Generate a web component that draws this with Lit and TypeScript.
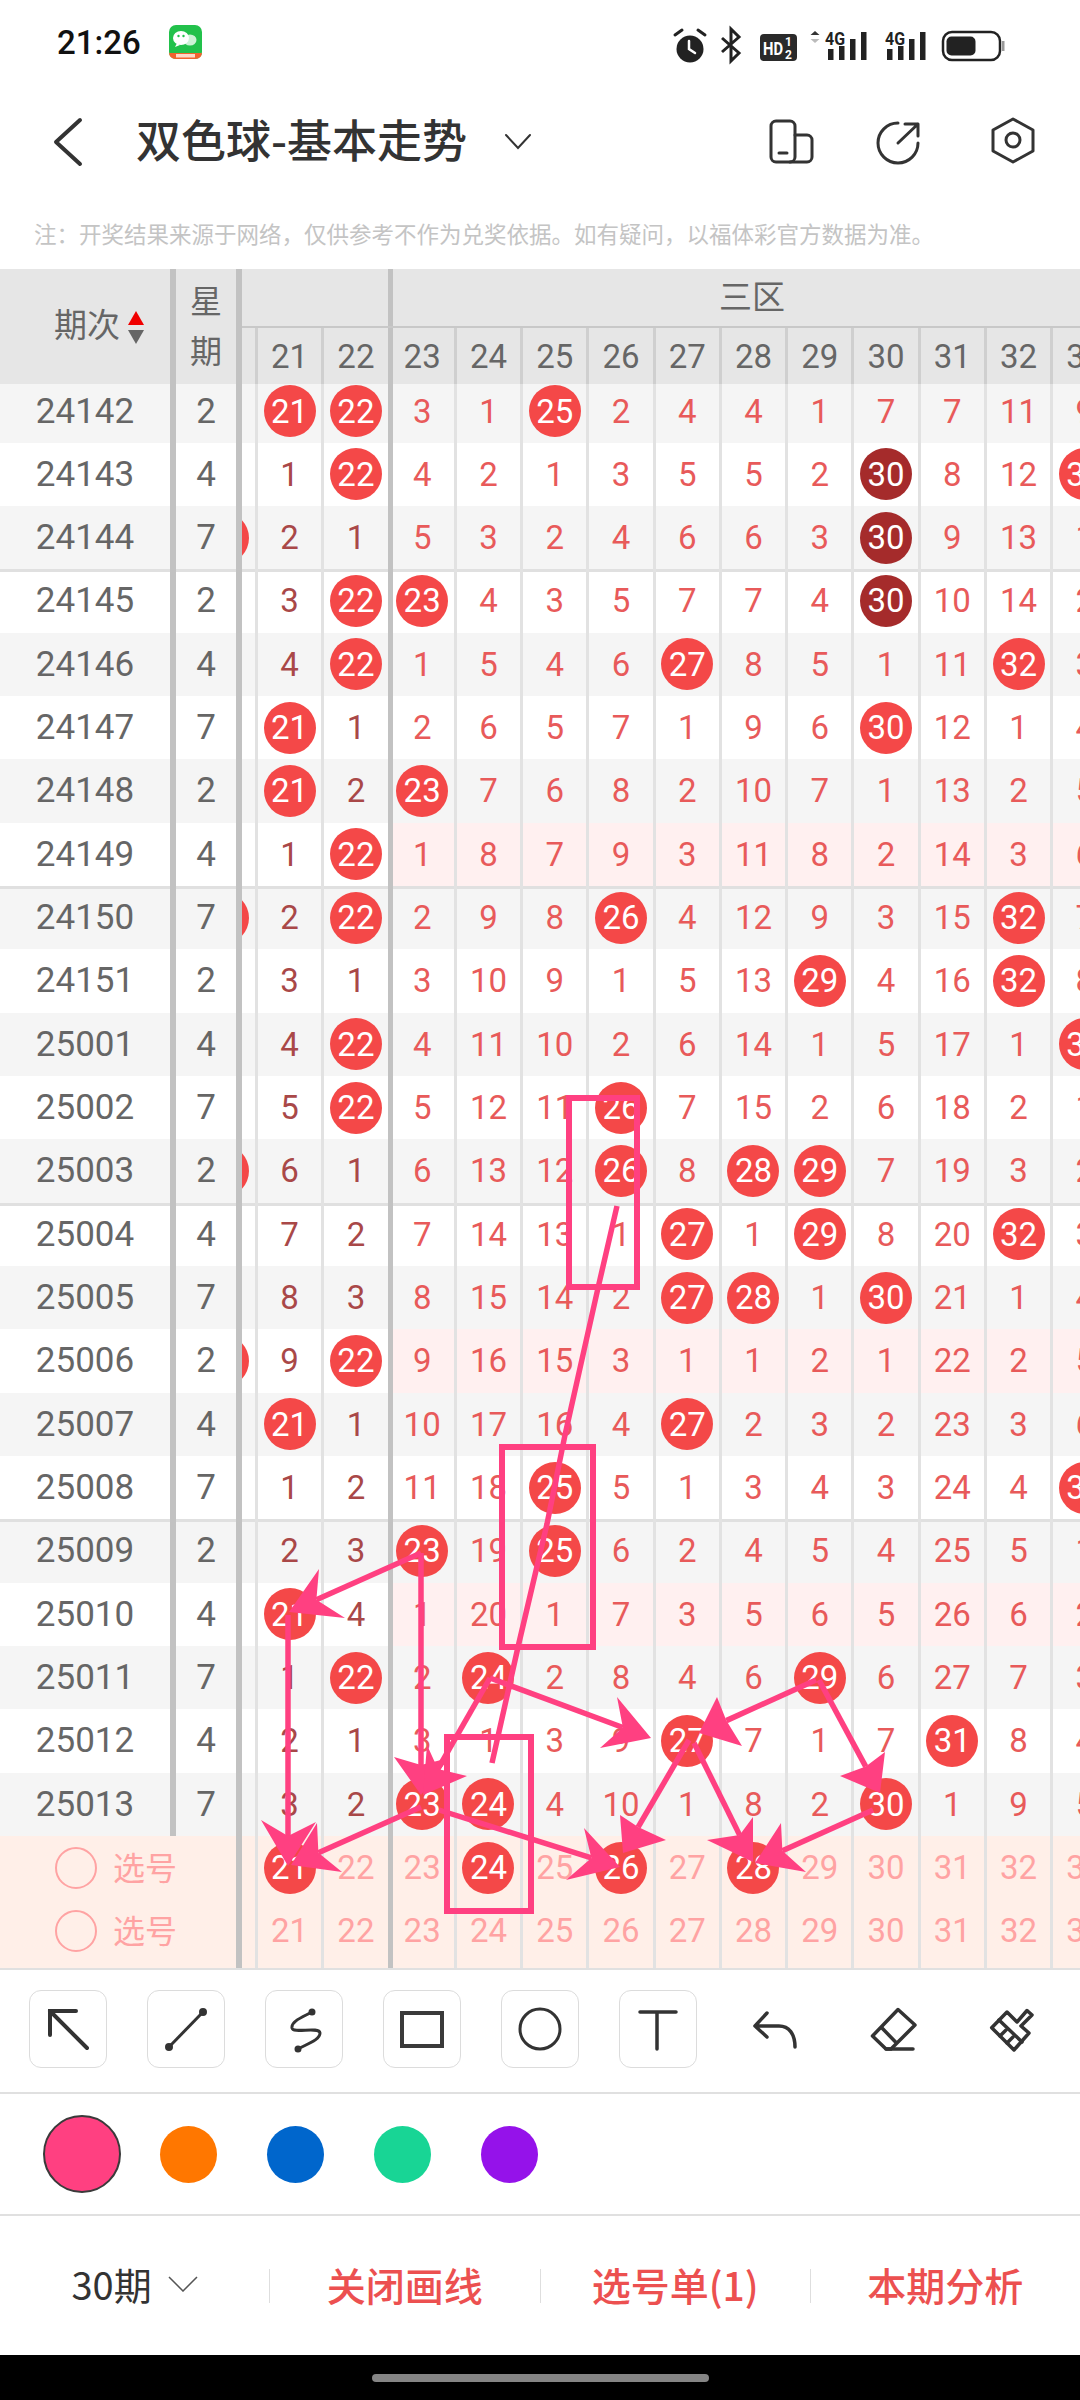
import { LitElement, html, svg, css } from 'lit';
import { customElement } from 'lit/decorators.js';

const ROWS: [string, string, string, boolean?][] = [
  ['24142', '2', '21* 22* 3 1 25* 2 4 4 1 7 7 11 9'],
  ['24143', '4', '1 22* 4 2 1 3 5 5 2 30! 8 12 33*'],
  ['24144', '7', '2 1 5 3 2 4 6 6 3 30! 9 13 1', true],
  ['24145', '2', '3 22* 23* 4 3 5 7 7 4 30! 10 14 2'],
  ['24146', '4', '4 22* 1 5 4 6 27* 8 5 1 11 32* 3'],
  ['24147', '7', '21* 1 2 6 5 7 1 9 6 30* 12 1 4'],
  ['24148', '2', '21* 2 23* 7 6 8 2 10 7 1 13 2 5'],
  ['24149', '4', '1 22* 1 8 7 9 3 11 8 2 14 3 6'],
  ['24150', '7', '2 22* 2 9 8 26* 4 12 9 3 15 32* 7', true],
  ['24151', '2', '3 1 3 10 9 1 5 13 29* 4 16 32* 8'],
  ['25001', '4', '4 22* 4 11 10 2 6 14 1 5 17 1 33*'],
  ['25002', '7', '5 22* 5 12 11 26* 7 15 2 6 18 2 1'],
  ['25003', '2', '6 1 6 13 12 26* 8 28* 29* 7 19 3 2', true],
  ['25004', '4', '7 2 7 14 13 1 27* 1 29* 8 20 32* 3'],
  ['25005', '7', '8 3 8 15 14 2 27* 28* 1 30* 21 1 4'],
  ['25006', '2', '9 22* 9 16 15 3 1 1 2 1 22 2 5', true],
  ['25007', '4', '21* 1 10 17 16 4 27* 2 3 2 23 3 6'],
  ['25008', '7', '1 2 11 18 25* 5 1 3 4 3 24 4 33*'],
  ['25009', '2', '2 3 23* 19 25* 6 2 4 5 4 25 5 1'],
  ['25010', '4', '21* 4 1 20 1 7 3 5 6 5 26 6 2'],
  ['25011', '7', '1 22* 2 24* 2 8 4 6 29* 6 27 7 3'],
  ['25012', '4', '2 1 3 1 3 9 27* 7 1 7 31* 8 4'],
  ['25013', '7', '3 2 23* 24* 4 10 1 8 2 30* 1 9 5'],
];
const HOT_ROWS = [7, 15, 19];
const COLS = [21, 22, 23, 24, 25, 26, 27, 28, 29, 30, 31, 32, 33];
const PICKED = [21, 24, 26, 28];

type P = [number, number];
const ARROWS: { from: P; tip: P; a: P; b: P }[] = [
  { from: [421, 1553], tip: [289, 1612], a: [319, 1569], b: [345, 1618] },
  { from: [288, 1615], tip: [288, 1866], a: [261, 1820], b: [316, 1822] },
  { from: [421, 1807], tip: [291, 1865], a: [317, 1823], b: [342, 1872] },
  { from: [421, 1553], tip: [421, 1795], a: [394, 1757], b: [449, 1758] },
  { from: [490, 1678], tip: [423, 1795], a: [467, 1776], b: [427, 1745] },
  { from: [490, 1678], tip: [651, 1738], a: [617, 1697], b: [600, 1748] },
  { from: [816, 1680], tip: [699, 1733], a: [717, 1697], b: [742, 1746] },
  { from: [689, 1740], tip: [623, 1853], a: [620, 1815], b: [666, 1840] },
  { from: [439, 1810], tip: [620, 1867], a: [584, 1828], b: [566, 1880] },
  { from: [694, 1743], tip: [753, 1862], a: [707, 1840], b: [753, 1817] },
  { from: [873, 1810], tip: [755, 1863], a: [781, 1823], b: [806, 1872] },
  { from: [819, 1680], tip: [880, 1793], a: [885, 1752], b: [840, 1776] },
];
const SWATCHES = ['#ff4081', '#ff7700', '#0066cc', '#18d595', '#9512ea'];

@customElement('app-root')
export class AppRoot extends LitElement {
  static styles = css`
    :host {
      display: flex;
      flex-direction: column;
      width: 1080px;
      height: 2400px;
      overflow: hidden;
      background: #fff;
      font-family: Roboto, 'Noto Sans CJK SC', sans-serif;
    }
    .status {
      height: 84px;
      flex: none;
      display: flex;
      align-items: center;
      padding-left: 57px;
      box-sizing: border-box;
    }
    .time {
      font-size: 33px;
      font-weight: 500;
      color: #111;
      width: 112px;
    }
    .status svg {
      display: block;
      overflow: visible;
    }
    .status .right {
      margin-left: auto;
      display: block;
      margin-right: 70px;
    }
    .nav {
      height: 116px;
      flex: none;
      display: flex;
      align-items: center;
      padding: 0 44px 0 54px;
      box-sizing: border-box;
      color: #333;
    }
    .nav svg {
      display: block;
      overflow: visible;
      flex: none;
    }
    .title {
      font-family: 'Noto Sans CJK SC', sans-serif;
      font-size: 45px;
      line-height: 60px;
      font-weight: 500;
      margin: 0 38px 6px 54px;
      white-space: nowrap;
    }
    .nav-icons {
      margin-left: auto;
      display: flex;
      gap: 63px;
    }
    .nav-icons svg:last-child {
      margin-left: 4px;
    }
    .note {
      height: 69px;
      flex: none;
      box-sizing: border-box;
      padding: 18px 0 0 34px;
      font-family: 'Noto Sans CJK SC', sans-serif;
      font-size: 22.5px;
      line-height: 30px;
      color: #c4c4c4;
      white-space: nowrap;
    }
    .table {
      position: relative;
      height: 1699px;
      flex: none;
      overflow: hidden;
      background: #fff;
    }
    .overlay {
      position: absolute;
      left: 0;
      top: 0;
      width: 1080px;
      height: 1699px;
      pointer-events: none;
    }
    .head {
      height: 115px;
      display: flex;
      background: #e6e6e6;
      color: #666;
      overflow: hidden;
    }
    .head-period {
      width: 176px;
      flex: none;
      box-sizing: border-box;
      border-right: 6px solid #c2c2c2;
      padding-left: 28px;
      display: flex;
      align-items: center;
      justify-content: center;
      gap: 8px;
      font-family: 'Noto Sans CJK SC', sans-serif;
      font-size: 33px;
    }
    .head-period span:first-child {
      margin-bottom: 8px;
    }
    .sort {
      display: flex;
      flex-direction: column;
      gap: 5px;
      margin-top: 2px;
    }
    .sort i {
      display: block;
      width: 0;
      height: 0;
      border-left: 8.5px solid transparent;
      border-right: 8.5px solid transparent;
    }
    .sort .up {
      border-bottom: 14px solid #f00000;
    }
    .sort .down {
      border-top: 14px solid #666;
    }
    .head-week {
      width: 66px;
      flex: none;
      box-sizing: border-box;
      border-right: 6px solid #c2c2c2;
      padding-bottom: 6px;
      display: flex;
      flex-direction: column;
      align-items: center;
      justify-content: center;
      font-family: 'Noto Sans CJK SC', sans-serif;
      font-size: 32px;
      line-height: 50px;
    }
    .head-cols {
      flex: none;
      width: 900px;
      display: flex;
      flex-direction: column;
    }
    .zones {
      height: 57px;
      flex: none;
      display: flex;
      border-bottom: 2px solid #c8c8c8;
    }
    .zone-blank {
      width: 145.5px;
      flex: none;
    }
    .zone {
      width: 729px;
      flex: none;
      box-sizing: border-box;
      padding-bottom: 6px;
      display: flex;
      align-items: center;
      justify-content: center;
      font-family: 'Noto Sans CJK SC', sans-serif;
      font-size: 33px;
      box-shadow: inset 5px 0 0 #c2c2c2;
    }
    .nums {
      flex: 1;
      display: flex;
    }
    .body {
      height: 1584px;
      overflow: hidden;
    }
    .rows {
      margin-top: -4.67px;
    }
    .row {
      height: 63.33px;
      display: flex;
      font-size: 35px;
      color: #666;
    }
    .row.even {
      background: #f5f5f5;
    }
    .row.line {
      box-shadow: inset 0 3px 0 #e0e0e0;
    }
    .period {
      width: 176px;
      flex: none;
      box-sizing: border-box;
      border-right: 6px solid #c2c2c2;
      display: flex;
      align-items: center;
      justify-content: center;
    }
    .week {
      width: 66px;
      flex: none;
      box-sizing: border-box;
      border-right: 6px solid #c2c2c2;
      display: flex;
      align-items: center;
      justify-content: center;
    }
    .stub {
      width: 13px;
      flex: none;
      overflow: hidden;
      display: flex;
      align-items: center;
    }
    .stub .ball {
      margin-left: -45px;
    }
    .cell {
      width: 66.27px;
      flex: none;
      box-sizing: border-box;
      padding-left: 3px;
      display: flex;
      align-items: center;
      justify-content: center;
      font-size: 33px;
      color: #e85a5a;
      box-shadow: inset 3px 0 0 #e2e2e2;
    }
    .head .cell {
      color: #666;
      box-shadow: inset 3px 0 0 #cfcfcf;
    }
    .cell.dark {
      color: #a94848;
    }
    .cell.split,
    .head .cell.split {
      box-shadow: inset 5px 0 0 #c2c2c2;
    }
    .row.hot .cell.z3 {
      background: #fff0f0;
    }
    .ball {
      flex: none;
      width: 52px;
      height: 52px;
      border-radius: 50%;
      background: #f44848;
      color: #fff;
      display: flex;
      align-items: center;
      justify-content: center;
      font-size: 33px;
    }
    .ball.deep {
      background: #a52b2b;
    }
    .pick {
      background: #ffefe8;
    }
    .pick .cell {
      color: #ffa3a3;
    }
    .pick.last {
      height: 68.33px;
    }
    .pick.last .cell,
    .pick.last .pick-label {
      padding-bottom: 5px;
    }
    .pick-label {
      width: 242px;
      flex: none;
      box-sizing: border-box;
      border-right: 6px solid #c2c2c2;
      display: flex;
      align-items: center;
      padding-left: 55px;
      gap: 16px;
      color: #ffa3a3;
      font-family: 'Noto Sans CJK SC', sans-serif;
      font-size: 32px;
    }
    .radio {
      width: 42px;
      height: 42px;
      box-sizing: border-box;
      border: 2.5px solid #ffa3a3;
      border-radius: 50%;
    }
    .pick-label b {
      font-weight: 400;
      margin-bottom: 4px;
    }
    .tools {
      height: 126px;
      flex: none;
      box-sizing: border-box;
      border-top: 2px solid #e0e0e0;
      border-bottom: 2px solid #e0e0e0;
      display: flex;
      gap: 40px;
      padding: 20px 0 0 29px;
    }
    .tool {
      width: 78px;
      height: 78px;
      flex: none;
      box-sizing: border-box;
      color: #333;
    }
    .tool.boxed {
      border: 1.5px solid #dcdcdc;
      border-radius: 12px;
    }
    .tool svg {
      display: block;
      overflow: visible;
      margin: -1.5px;
    }
    .tool:not(.boxed) svg {
      margin: 0;
    }
    .swatches {
      height: 122px;
      flex: none;
      box-sizing: border-box;
      border-bottom: 2px solid #e0e0e0;
      display: flex;
      align-items: center;
      padding-left: 28px;
    }
    .slot {
      width: 107px;
      flex: none;
      display: flex;
      justify-content: center;
    }
    .dot {
      width: 57px;
      height: 57px;
      border-radius: 50%;
    }
    .dot.on {
      width: 78px;
      height: 78px;
      box-sizing: border-box;
      border: 2px solid #3a3a3a;
    }
    .actions {
      height: 139px;
      flex: none;
      display: flex;
      align-items: center;
    }
    .act {
      flex: 1;
      display: flex;
      align-items: center;
      justify-content: center;
      padding-bottom: 4px;
      font-family: 'Noto Sans CJK SC', sans-serif;
      font-size: 39px;
      font-weight: 500;
      color: #ec5050;
      white-space: nowrap;
    }
    .act.span {
      color: #333;
      font-weight: 400;
      font-size: 38px;
      gap: 16px;
    }
    .vr {
      width: 1px;
      height: 34px;
      flex: none;
      background: #dedede;
    }
    .navbar {
      flex: 1;
      background: #000;
      display: flex;
      align-items: center;
      justify-content: center;
    }
    .pill {
      width: 337px;
      height: 8px;
      border-radius: 4px;
      background: #858585;
    }
  `;

  private renderCell(tok: string, i: number) {
    const n = tok.replace(/[*!]/, '');
    const isBall = tok.length !== n.length;
    const cls = `cell ${i < 2 ? 'dark' : 'z3'} ${i === 2 ? 'split' : ''}`;
    return html`<div class=${cls}>
      ${isBall ? html`<div class="ball ${tok.endsWith('!') ? 'deep' : ''}">${n}</div>` : n}
    </div>`;
  }

  private renderStatus() {
    const bars = (x: number) => svg`
      <rect x=${x} y="43" width="5.5" height="11" fill="#222"/>
      <rect x=${x + 11} y="40" width="5.5" height="14" fill="#222"/>
      <rect x=${x + 22} y="33" width="5.5" height="21" fill="#222"/>
      <rect x=${x + 33} y="26" width="5.5" height="28" fill="#222"/>`;
    return html`<div class="status">
      <span class="time">21:26</span>
      <svg width="34" height="34" viewBox="0 0 34 34">
        <rect width="33" height="34" rx="7" fill="#22c14b"/>
        <path d="M0 28H33V27 27Q33 34 26 34H7Q0 34 0 27Z" fill="#f2622e"/>
        <rect x="7" y="29" width="19" height="3.5" fill="#ffd9c8"/>
        <ellipse cx="21" cy="15" rx="6.5" ry="5.5" fill="#cdf2d6"/>
        <ellipse cx="12" cy="13" rx="8" ry="7" fill="#fff"/>
        <path d="M8 18l-2 4 5-2z" fill="#fff"/>
        <circle cx="9.5" cy="11" r="1.2" fill="#22c14b"/>
        <circle cx="14.5" cy="11" r="1.2" fill="#22c14b"/>
      </svg>
      <svg class="right" width="350" height="56" viewBox="660 8 350 56">
        <circle cx="690" cy="43" r="13.5" fill="#222"/>
        <path d="M675 29l7-5M698 24l7 5" stroke="#222" stroke-width="3" stroke-linecap="round"/>
        <path d="M689 35v8l6 4" stroke="#fff" stroke-width="2.5" fill="none" stroke-linecap="round"/>
        <path d="M722 32l17 15-8 8V23l8 8-17 15" stroke="#222" stroke-width="3" fill="none"/>
        <rect x="760" y="28" width="37" height="27" rx="4" fill="#2a2a2a"/>
        <text x="763" y="49" font-size="19" font-weight="700" fill="#fff" textLength="20" lengthAdjust="spacingAndGlyphs" font-family="Roboto">HD</text>
        <text x="785" y="40" font-size="12" font-weight="700" fill="#fff" font-family="Roboto">1</text>
        <text x="785" y="53" font-size="12" font-weight="700" fill="#fff" font-family="Roboto">2</text>
        <path d="M815 25l-4.500 4h9z" fill="#333"/>
        <path d="M815 37l-4.500-4h9z" fill="#bbb"/>
        <text x="825" y="39" font-size="19" font-weight="700" fill="#222" textLength="20" lengthAdjust="spacingAndGlyphs" font-family="Roboto">4G</text>
        ${bars(828)}
        <text x="885" y="39" font-size="19" font-weight="700" fill="#222" textLength="20" lengthAdjust="spacingAndGlyphs" font-family="Roboto">4G</text>
        ${bars(887)}
        <rect x="943" y="26" width="57" height="28" rx="9" fill="none" stroke="#222" stroke-width="2.500"/>
        <rect x="946.500" y="30.500" width="29" height="19" rx="5" fill="#222"/>
        <rect x="1002" y="35" width="2.500" height="10" fill="#999"/>
      </svg>
    </div>`;
  }

  private renderNav() {
    return html`<div class="nav">
      <svg width="28" height="46" viewBox="0 0 28 46">
        <path d="M26 1L2 23l24 22" fill="none" stroke="#333" stroke-width="4" stroke-linecap="round" stroke-linejoin="round"/>
      </svg>
      <span class="title">双色球-基本走势</span>
      <svg width="26" height="16" viewBox="0 0 26 16">
        <path d="M1 1l12 13L25 1" fill="none" stroke="#333" stroke-width="2" stroke-linecap="round"/>
      </svg>
      <div class="nav-icons">
        <svg width="46" height="46" viewBox="0 0 46 46" fill="none" stroke="#333" stroke-width="3" stroke-linecap="round" stroke-linejoin="round">
          <rect x="3" y="2" width="24" height="41" rx="5"/>
          <path d="M27 16h12a5 5 0 0 1 5 5v17a5 5 0 0 1-5 5H22"/>
          <path d="M11 34h8"/>
        </svg>
        <svg width="46" height="46" viewBox="0 0 46 46" fill="none" stroke="#333" stroke-width="3" stroke-linecap="round" stroke-linejoin="round">
          <path d="M21 4A20 20 0 1 0 41 24"/>
          <path d="M21 24L41 5M28 5H41V17"/>
        </svg>
        <svg width="46" height="46" viewBox="0 0 46 46" fill="none" stroke="#333" stroke-width="3" stroke-linejoin="round">
          <path d="M23 0L43 11V32L23 43 3 32V11Z"/>
          <circle cx="23" cy="21" r="7"/>
        </svg>
      </div>
    </div>`;
  }

  private renderHead() {
    return html`<div class="head">
      <div class="head-period">
        <span>期次</span>
        <span class="sort"><i class="up"></i><i class="down"></i></span>
      </div>
      <div class="head-week"><span>星</span><span>期</span></div>
      <div class="head-cols">
        <div class="zones">
          <div class="zone-blank"></div>
          <div class="zone">三区</div>
        </div>
        <div class="nums">
          <div class="stub"></div>
          ${COLS.map((c, i) => html`<div class="cell ${i === 2 ? 'split' : ''}">${c}</div>`)}
        </div>
      </div>
    </div>`;
  }

  private renderPick(last: boolean, picked: number[]) {
    return html`<div class="row pick ${last ? 'last' : ''}">
      <div class="pick-label"><span class="radio"></span><b>选号</b></div>
      <div class="stub"></div>
      ${COLS.map(
        (c, i) => html`<div class="cell ${i === 2 ? 'split' : ''}">
          ${picked.includes(c) ? html`<div class="ball">${c}</div>` : c}
        </div>`,
      )}
    </div>`;
  }

  private renderOverlay() {
    const stroke = '#ff4081';
    return html`<svg class="overlay" viewBox="0 269 1080 1699" fill="none">
      <g stroke=${stroke} stroke-width="6">
        <rect x="569" y="1098" width="68" height="189"/>
        <rect x="502" y="1447" width="91" height="200"/>
        <rect x="447" y="1737" width="84" height="174"/>
      </g>
      <polyline points="617,1206 598,1288 565,1435 547,1524 518,1647 492,1763" stroke=${stroke} stroke-width="5.500"/>
      ${ARROWS.map(({ from, tip, a, b }) => {
        const dx = from[0] - tip[0];
        const dy = from[1] - tip[1];
        const len = Math.hypot(dx, dy);
        const nx = tip[0] + (dx / len) * 30;
        const ny = tip[1] + (dy / len) * 30;
        return svg`
          <line x1=${from[0]} y1=${from[1]} x2=${nx} y2=${ny} stroke=${stroke} stroke-width="5.500"/>
          <polygon points="${tip[0]},${tip[1]} ${a[0]},${a[1]} ${nx},${ny} ${b[0]},${b[1]}" fill=${stroke}/>`;
      })}
    </svg>`;
  }

  private renderTools() {
    return html`<div class="tools">
      <div class="tool boxed">
        <svg width="78" height="78" viewBox="0 0 78 78" fill="none" stroke="#333" stroke-width="4" stroke-linecap="round">
          <path d="M58 58L21 21M47 21H21V45"/>
        </svg>
      </div>
      <div class="tool boxed">
        <svg width="78" height="78" viewBox="0 0 78 78" fill="#333" stroke="#333" stroke-width="3">
          <path d="M22 57L56 22"/>
          <circle cx="22" cy="57" r="2.500"/>
          <circle cx="56" cy="22" r="2.500"/>
        </svg>
      </div>
      <div class="tool boxed">
        <svg width="78" height="78" viewBox="0 0 78 78" fill="none" stroke="#333" stroke-width="3" stroke-linecap="round">
          <path d="M47 22C38 27 26 31 27 38C28 44 54 36 55 43C55 50 42 54 33 59"/>
          <circle cx="47" cy="22" r="2" fill="#333"/>
          <circle cx="33" cy="59" r="2" fill="#333"/>
        </svg>
      </div>
      <div class="tool boxed">
        <svg width="78" height="78" viewBox="0 0 78 78" fill="none" stroke="#3a3a3a" stroke-width="4">
          <rect x="19" y="23" width="40" height="33"/>
        </svg>
      </div>
      <div class="tool boxed">
        <svg width="78" height="78" viewBox="0 0 78 78" fill="none" stroke="#333" stroke-width="3">
          <circle cx="39" cy="39" r="20"/>
        </svg>
      </div>
      <div class="tool boxed">
        <svg width="78" height="78" viewBox="0 0 78 78" fill="none" stroke="#333" stroke-width="3.500" stroke-linecap="round">
          <path d="M21 22H57M38 22V59"/>
        </svg>
      </div>
      <div class="tool">
        <svg width="78" height="78" viewBox="0 0 78 78" fill="none" stroke="#333" stroke-width="3.500" stroke-linecap="round" stroke-linejoin="round">
          <path d="M30 23L18 36L30 47M18 36H42C52 36 58 44 58 57"/>
        </svg>
      </div>
      <div class="tool">
        <svg width="78" height="78" viewBox="0 0 78 78" fill="none" stroke="#333" stroke-width="3.500" stroke-linecap="round" stroke-linejoin="round">
          <path d="M43 19.500L60 35L36 59H31L17.500 46Z"/>
          <path d="M27 38L41 52.500M31 59H58"/>
        </svg>
      </div>
      <div class="tool">
        <svg width="78" height="78" viewBox="0 0 78 78" fill="none" stroke="#333" stroke-width="3.500" stroke-linecap="round" stroke-linejoin="round">
          <path d="M34 22L18.700 37.700L41 60L56 43L48 36L59 25L54 20.500L44 32Z"/>
          <path d="M26 30L49 52M27 46L33 40M34 53L40 47"/>
        </svg>
      </div>
    </div>`;
  }

  render() {
    return html`
      ${this.renderStatus()} ${this.renderNav()}
      <div class="note">注\uFF1A开奖结果来源于网络\uFF0C仅供参考不作为兑奖依据。如有疑问\uFF0C以福体彩官方数据为准。</div>
      <div class="table">
        ${this.renderHead()}
        <div class="body">
          <div class="rows">
            ${ROWS.map(([period, week, data, stub], r) => {
              const cls = `row ${r % 2 === 0 ? 'even' : ''} ${r % 5 === 3 ? 'line' : ''} ${HOT_ROWS.includes(r) ? 'hot' : ''}`;
              return html`<div class=${cls}>
                <div class="period">${period}</div>
                <div class="week">${week}</div>
                <div class="stub">${stub ? html`<div class="ball"></div>` : ''}</div>
                ${data.split(' ').map((t, i) => this.renderCell(t, i))}
              </div>`;
            })}
            ${this.renderPick(false, PICKED)} ${this.renderPick(true, [])}
          </div>
        </div>
        ${this.renderOverlay()}
      </div>
      ${this.renderTools()}
      <div class="swatches">
        ${SWATCHES.map(
          (c, i) => html`<div class="slot">
            <div class="dot ${i === 0 ? 'on' : ''}" style="background:${c}"></div>
          </div>`,
        )}
      </div>
      <div class="actions">
        <div class="act span">
          30期
          <svg width="30" height="16" viewBox="0 0 30 16">
            <path d="M1 1l14 14L29 1" fill="none" stroke="#555" stroke-width="1.500"/>
          </svg>
        </div>
        <div class="vr"></div>
        <div class="act">关闭画线</div>
        <div class="vr"></div>
        <div class="act">选号单(1)</div>
        <div class="vr"></div>
        <div class="act">本期分析</div>
      </div>
      <div class="navbar"><div class="pill"></div></div>
    `;
  }
}
